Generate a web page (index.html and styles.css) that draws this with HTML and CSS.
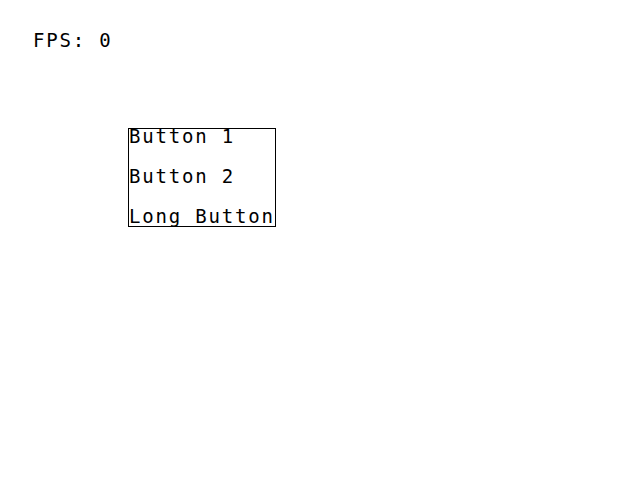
FILE: index.html
```html
<!DOCTYPE html>
<html>
<head>
<meta charset="utf-8">
<link rel="stylesheet" href="styles.css">
</head>
<body>
<div class="fps">FPS: 0</div>
<div class="menu">
  <div class="item">Button 1</div>
  <div class="item">Button 2</div>
  <div class="item">Long Button</div>
</div>
</body>
</html>
```
FILE: styles.css
```css
html, body {
  margin: 0;
  padding: 0;
  background: #fff;
}
body {
  width: 640px;
  height: 480px;
  font-family: "DejaVu Sans Mono", "Liberation Mono", monospace;
  font-size: 19px;
  letter-spacing: 1.8px;
  color: #000;
  -webkit-font-smoothing: none;
}
.fps {
  margin: 33px 0 0 33px;
  line-height: 15px;
}
.menu {
  display: inline-flex;
  flex-direction: column;
  gap: 25px;
  margin: 80px 0 0 128px;
  border: 1px solid #000;
  padding-bottom: 2px;
}
.item {
  line-height: 15px;
  white-space: nowrap;
}
```
